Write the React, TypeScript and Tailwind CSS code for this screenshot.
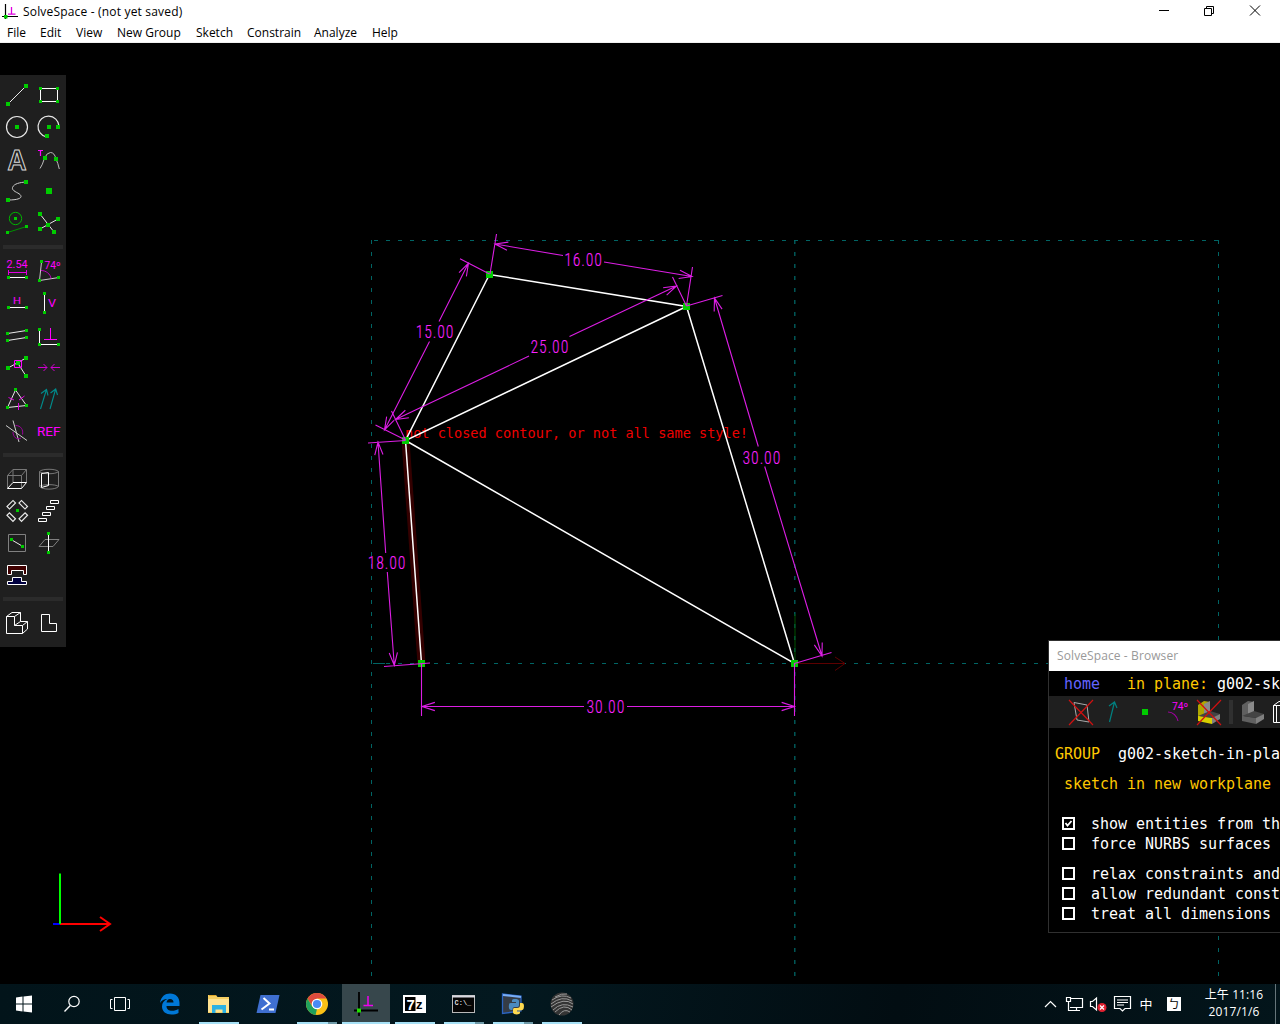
import React from "react";

type Pt = [number, number];

const W = "#ffffff";
const G = "#00cc00";
const M = "#ff00ff";
const D = "#dc1ee4";

function Dots({ pts, s = 4 }: { pts: Pt[]; s?: number }) {
  return (
    <g fill={G} stroke="none" shapeRendering="crispEdges">
      {pts.map(([x, y], i) => (
        <rect key={i} x={Math.floor(x - s / 2)} y={Math.floor(y - s / 2)} width={s} height={s} />
      ))}
    </g>
  );
}

function Icon({ children }: { children?: React.ReactNode }) {
  return (
    <svg className="block size-8 shrink-0" viewBox="0 0 32 32" fill="none" stroke="#e8e8e8" strokeWidth="1">
      {children}
    </svg>
  );
}

function IconText({ x, y, size, w, children }: { x: number; y: number; size: number; w: number; children: string }) {
  return (
    <text x={x} y={y} fill={M} stroke="none" fontFamily="Roboto, sans-serif" fontSize={size} textLength={w} lengthAdjust="spacingAndGlyphs">
      {children}
    </text>
  );
}

const drawTools = [
  <Icon key="line"><path d="M7 25L25 7" /><Dots pts={[[7, 25], [25, 7]]} /></Icon>,
  <Icon key="rect"><path d="M7.5 9.5H24.5V22.5H7.5Z" stroke={W} /><Dots s={3} pts={[[8, 10], [25, 10], [8, 23], [25, 23]]} /></Icon>,
  <Icon key="circle"><circle cx="16" cy="16" r="10.5" strokeWidth="1.2" /><Dots pts={[[16, 16]]} /></Icon>,
  <Icon key="arc"><path d="M26 15A10.5 10.5 0 1 0 13.5 26" strokeWidth="1.2" /><Dots pts={[[16, 16], [25, 16], [14, 25]]} /></Icon>,
  <Icon key="text">
    <text x="6.5" y="26.5" fill="none" stroke="#d8d8d8" strokeWidth="1" fontFamily="Inter, sans-serif" fontWeight="600" fontSize="27" textLength="19" lengthAdjust="spacingAndGlyphs">A</text>
  </Icon>,
  <Icon key="tangent">
    <path d="M7 25.500Q9.500 22 11.500 15Q14 9.500 17.500 9.500Q21.500 9.500 23 16Q25 20 26.300 26" stroke="#bbb" />
    <path d="M5 7.500H10M7.500 7V13" stroke={M} strokeWidth="1.2" />
    <Dots pts={[[12, 15], [23, 16]]} />
  </Icon>,
  <Icon key="spline"><path d="M7 25C20 25 21.500 22 19 19.500C17 17.500 10.500 16 11.500 12.500C13 8.500 19 7.500 25 7" stroke="#ccc" /><Dots pts={[[7, 25], [25, 7]]} /></Icon>,
  <Icon key="point"><Dots s={6} pts={[[16, 16]]} /></Icon>,
  <Icon key="construction"><circle cx="14.500" cy="11.500" r="6.200" stroke="#00b400" /><path d="M6.500 25.500L25.500 19.500" stroke="#009000" /><Dots s={3} pts={[[15, 12], [7, 26], [26, 20]]} /></Icon>,
  <Icon key="split"><path d="M7 7L21 25M7 22L25 12" /><Dots pts={[[7, 7], [21, 25], [7, 22], [25, 12], [15, 18]]} /></Icon>,
];

const constraintTools = [
  <Icon key="dist">
    <IconText x={5.5} y={13} size={10} w={21}>2.54</IconText>
    <path d="M7 17.500H26M7.500 15V20M25.500 15V20" stroke="#e000e0" />
    <path d="M7 22.500H26" stroke={W} /><Dots s={3} pts={[[8, 23], [26, 23]]} />
  </Icon>,
  <Icon key="angle">
    <path d="M8.500 7L6.500 25.500L26 22.500" stroke="#ccc" />
    <path d="M8 15.500C13 15.500 17.500 19 18 23.500" stroke="#c000c0" />
    <IconText x={11.5} y={14} size={10} w={16}>74º</IconText>
    <Dots s={3} pts={[[9, 7], [7, 26], [26, 23]]} />
  </Icon>,
  <Icon key="h"><IconText x={12} y={17} size={9.5} w={8}>H</IconText><path d="M7 20.500H26" stroke={W} /><Dots s={3} pts={[[8, 21], [26, 21]]} /></Icon>,
  <Icon key="v"><path d="M11.500 7V26" stroke={W} /><IconText x={15} y={20.3} size={11} w={8}>V</IconText><Dots s={3} pts={[[12, 7], [12, 26]]} /></Icon>,
  <Icon key="parallel"><path d="M6.500 14.500L25.500 11.500M6.500 21.500L25.500 18.500" /><Dots s={3} pts={[[7, 15], [26, 12], [7, 22], [26, 19]]} /></Icon>,
  <Icon key="perp"><path d="M6.500 11V25.500H26" stroke={W} /><path d="M17.500 9V20.500M11 20.500H24" stroke={M} /><Dots s={3} pts={[[7, 11], [7, 26], [26, 26]]} /></Icon>,
  <Icon key="on"><path d="M7 17L25 7M17 12.500L25 25" /><Dots pts={[[25, 7], [7, 17], [25, 25], [17, 12.5]]} /><path d="M13.500 9.500H20.500V16.500H13.500Z" stroke={M} /></Icon>,
  <Icon key="sym"><path d="M5 16.500H14M10.500 13L14 16.500L10.500 20M27 16.500H18M21.500 13L18 16.500L21.500 20" stroke="#d000d0" /></Icon>,
  <Icon key="equal">
    <path d="M14.500 7L6.500 24.500L25.500 22.500Z" />
    <path d="M7.500 14.500L13 17M18 17L23.500 13M17.500 20V27" stroke="#e000e0" />
    <Dots s={3} pts={[[15, 7], [7, 25], [26, 23]]} />
  </Icon>,
  <Icon key="same"><path d="M7.500 26L13.500 6.500M8 10.500L13.500 6.500L15 12.500M17 26L22.700 6M17.500 10L22.700 6L24.500 12" stroke="#008c8c" strokeWidth="1.1" /></Icon>,
  <Icon key="other"><path d="M5 10.500L26 25.500M12 5.500L18 27" stroke="#ccc" /><path d="M14.500 10.500C20 10.500 22.500 15 21.500 19.500M12 17C12 22 16 25.500 20 23" stroke="#a000a0" /></Icon>,
  <Icon key="ref"><IconText x={4} y={20.5} size={12} w={23.5}>REF</IconText></Icon>,
];

const groupTools = [
  <Icon key="extrude"><path d="M6.500 25.500V12.500H20.500V25.500M6.500 12.500L12 6.500H25.500V19.500M20.500 12.500L25.500 6.500M12 6.500V19.500" stroke="#777" /><path d="M6.500 25.500H20.500L25.500 19.500H12Z" stroke={W} /></Icon>,
  <Icon key="lathe">
    <path d="M6.500 8.500V23.500C9 27 23 27 25.500 23.500V8.500M6.500 8.500C9 5.500 23 5.500 25.500 8.500C23 11.500 9 11.500 6.500 8.500M6.500 23.500C9 21 23 21 25.500 23.500" stroke="#777" />
    <path d="M8.500 10.500V24.500L15.500 22.500V9.500Z" stroke={W} />
  </Icon>,
  <Icon key="rotate">
    <g strokeWidth="1.2">
      <rect x="6" y="8" width="8.500" height="3.500" transform="rotate(-45 10.250 9.750)" />
      <rect x="18" y="8" width="8.500" height="3.500" transform="rotate(45 22.250 9.750)" />
      <rect x="6" y="20.300" width="8.500" height="3.500" transform="rotate(45 10.250 22)" />
      <rect x="18" y="20.300" width="8.500" height="3.500" transform="rotate(-45 22.250 22)" />
    </g>
    <Dots s={3} pts={[[17, 16]]} />
  </Icon>,
  <Icon key="translate"><path d="M5.500 23.500H13.500V26.500H5.500ZM9.500 17.500H17.500V20.500H9.500ZM13.500 11.500H21.500V14.500H13.500ZM17.500 5.500H25.500V8.500H17.500Z" stroke={W} /></Icon>,
  <Icon key="inplane"><path d="M7.500 7.500H24.500V24.500H7.500Z" stroke="#808080" /><path d="M10 12.500L22 19.500" /><Dots s={3} pts={[[11, 13], [22, 20]]} /></Icon>,
  <Icon key="workplane"><path d="M6 19.500L12 12.500H26L20 19.500Z" stroke="#808080" /><path d="M15.500 7V26" stroke={W} /><Dots s={3} pts={[[16, 7], [16, 26]]} /></Icon>,
  <Icon key="assemble">
    <path d="M6.500 6.500H25.500V15.500H22.500V11.500H10.500V15.500H6.500Z" fill="#400000" stroke={W} />
    <path d="M6.500 25.500V22.500H11.500V18.500H20.500V22.500H25.500V25.500Z" fill="#000040" stroke={W} />
  </Icon>,
  <Icon key="blank" />,
];

const viewTools = [
  <Icon key="iso">
    <path d="M5.500 9.500H13.500V18.500H21.500V26.500H5.500ZM5.500 9.500L11 5.500H19.500V14.500H26.500V22L21.500 26.500M13.500 9.500L19.500 5.500M13.500 18.500L19.500 14.500M21.500 18.500L26.500 14.500" stroke={W} />
  </Icon>,
  <Icon key="ortho"><path d="M8.500 7.500H16.500V16.500H23.500V24.500H8.500Z" stroke={W} /></Icon>,
];

function Separator() {
  return <div className="mx-[3px] my-1.5 h-1 bg-[#2b2b2b]" />;
}

function Toolbar() {
  const sections = [drawTools, constraintTools, groupTools, viewTools];
  return (
    <div className="absolute left-0 top-8 h-[572px] w-[66px] bg-[#1f1f1f] pt-1">
      {sections.map((s, i) => (
        <React.Fragment key={i}>
          {i > 0 && <Separator />}
          <div className="grid grid-cols-[32px_32px] pl-px">{s}</div>
        </React.Fragment>
      ))}
    </div>
  );
}

function arrow([x, y]: Pt, [fx, fy]: Pt, len = 13.5, spread = 0.31) {
  const a = Math.atan2(fy - y, fx - x);
  const p = (t: number) => `${x + len * Math.cos(t)} ${y + len * Math.sin(t)}`;
  return `M${p(a - spread)}L${x} ${y}L${p(a + spread)}`;
}

interface Dim {
  label: string;
  c: Pt;
  a: [Pt, Pt];
  b: [Pt, Pt];
  ext: string;
}

const dims: Dim[] = [
  { label: "16.00", c: [583, 259], a: [[495, 244], [563, 255.5]], b: [[692, 276.5], [604, 262]], ext: "M490 274L496.500 234M686.500 306L692.500 267" },
  { label: "15.00", c: [434.5, 331.5], a: [[468.5, 263], [439, 321.5]], b: [[384.5, 430], [429.5, 341.5]], ext: "M489.500 274L460 258.700M405.500 440L375.500 425" },
  { label: "25.00", c: [549.3, 346.5], a: [[676.5, 286], [569.5, 336.5]], b: [[395.5, 419.5], [529, 356]], ext: "M686.500 306L672.500 277M405.500 440L391.500 411" },
  { label: "30.00", c: [761.3, 457.5], a: [[714.5, 298], [758.3, 446.5]], b: [[822, 656], [764.7, 466.5]], ext: "M686.500 306L722.500 295.500M794.500 663.500L831.500 652.500" },
  { label: "18.00", c: [386.5, 562.5], a: [[378, 442], [385.7, 553]], b: [[394.3, 665.5], [387.3, 572]], ext: "M405.500 440.500L368 443M430 663L384 666.500" },
  { label: "30.00", c: [605.3, 706.5], a: [[422, 706.5], [584, 706.5]], b: [[794.5, 706.5], [627, 706.5]], ext: "M421.500 663V716M794.500 663V716" },
];

function Sketch() {
  return (
    <svg className="block h-full w-full" viewBox="0 43 1280 941" fill="none">
      <g stroke="#006464" strokeWidth="1" strokeDasharray="4 8">
        <path d="M371.500 240V976M1218.500 240V976" />
        <path d="M794.800 240V976" strokeWidth="1.300" />
        <path d="M374 240.500H1218M374 663.500H1218" />
      </g>
      <path d="M373 663.500H385" stroke="#006464" />
      <path d="M405.500 440.500L421.500 663.500" stroke="#330000" strokeWidth="8" />
      <text x="405" y="438" fill="#ee0000" fontFamily="'DejaVu Sans Mono', monospace" fontSize="13.600" textLength="343" lengthAdjust="spacingAndGlyphs">
        not closed contour, or not all same style!
      </text>
      <path d="M795 614V663" stroke="#005000" />
      <path d="M795 663.500H845M835 657L845 663.500L835 670.500" stroke="#5c0000" />
      <path d="M421.500 663.500L405.500 440.500L489.500 274.500L686.500 306.500L794.500 663.500L405.500 440.500L686.500 306.500" stroke={W} strokeWidth="1.500" />
      <Dots s={7} pts={[[406, 441], [490, 275], [687, 307], [795, 664], [422, 664]]} />
      {dims.map((d, i) => (
        <g key={i} stroke={D} strokeWidth="1.100">
          <path d={`M${d.a[0]}L${d.a[1]}M${d.b[0]}L${d.b[1]}${d.ext}${arrow(d.a[0], d.a[1])}${arrow(d.b[0], d.b[1])}`} />
          <text
            transform={`translate(${d.c[0] - 18.5} ${d.c[1] + 6.5}) scale(0.720 1)`}
            fill="#f822ff"
            stroke="#f822ff"
            strokeWidth="0.200"
            fontFamily="Roboto, sans-serif"
            fontWeight="300"
            fontSize="18"
            letterSpacing="1.900"
          >
            {d.label}
          </text>
        </g>
      ))}
      <g strokeWidth="2">
        <path d="M53 924H60" stroke="#0000ff" />
        <path d="M60 924H110M100 917L110 924L100 931" stroke="#ff0000" />
        <path d="M60 873.500V924" stroke="#00ff00" />
      </g>
    </svg>
  );
}

function Solid({ yellow = false }: { yellow?: boolean }) {
  return (
    <g stroke="none">
      <path d="M5 9L11 5L17 6V15L11 18L5 22Z" fill={yellow ? "#b0a800" : "#606060"} />
      <path d="M11 8L17 5V16L11 18Z" fill="#8a8a8a" />
      <path d="M5 20L17 15L27 18L20 22Z" fill="#444" />
      <path d="M5 20L19 22V28L5 25Z" fill={yellow ? "#d8d000" : "#606060"} />
      <path d="M19 22L27 18V23L19 28Z" fill="#808080" />
    </g>
  );
}

const cross = <path d="M4 4L28 29M28 4L4 29" stroke="#d01010" strokeWidth="1.200" />;

function Row({ children, className }: { children: React.ReactNode; className: string }) {
  return <div className={`h-5 whitespace-pre pl-[6px] ${className}`}>{children}</div>;
}

function Check({ label, on = false, className = "" }: { label: string; on?: boolean; className?: string }) {
  return (
    <div className={`flex h-5 pl-[13px] ${className}`}>
      <svg className="mr-4 mt-[3px] size-[13px] shrink-0" viewBox="0 0 13 13" fill="none" stroke={W}>
        <rect x="1" y="1" width="11" height="11" strokeWidth="2" />
        {on && <path d="M3.500 6L5.500 8.500L9.500 4" strokeWidth="1.800" />}
      </svg>
      <span className="whitespace-pre text-white">{label}</span>
    </div>
  );
}

function BrowserPanel() {
  return (
    <div className="absolute left-[1048px] top-[597px] h-[293px] w-[232px] overflow-hidden border-y border-l border-[#303030] bg-black">
      <div className="h-[30px] bg-white pl-2 font-['Open_Sans',sans-serif] text-[12px] leading-[30px] tracking-[0.1px] text-[#999999]">SolveSpace - Browser</div>
      <div className="pt-[3px] font-['DejaVu_Sans_Mono',monospace] text-[15px] leading-5 tracking-[-0.03px]">
        <Row className="text-white">
          <span className="text-[#6464ff]"> home</span>
          <span className="text-[#ffc800]">   in plane: </span>g002-sk
        </Row>
        <div className="mt-[2px] flex h-8 items-center bg-[#1f1f1f] pl-4">
          <Icon><path d="M9 6.500L22 9L24 26L12 24Z" stroke="#aaa" />{cross}</Icon>
          <Icon><path d="M12.500 26L17.500 6M12 10L17.500 6L20 12" stroke="#008080" strokeWidth="1.200" /></Icon>
          <Icon><Dots s={6} pts={[[16, 16]]} /></Icon>
          <Icon><path d="M7 16C12 16 16 20 17 25" stroke="#a000a0" strokeWidth="1.200" /><IconText x={11} y={14} size={10} w={16}>74º</IconText></Icon>
          <Icon><Solid yellow />{cross}</Icon>
          <div className="mx-1 h-6 w-1 shrink-0 bg-[#303030]" />
          <Icon><Solid /></Icon>
          <Icon><path d="M4.500 9.500L10 5.500H20V14H27V22L21.500 26.500H4.500ZM4.500 9.500H13.500V18.500H21.500V26.500M7.500 10V26" stroke={W} /></Icon>
        </div>
        <Row className="mt-4 text-white"><span className="text-[#ffc800]">GROUP  </span>g002-sketch-in-pla</Row>
        <Row className="mt-2.5 text-[#ffc800]"> sketch in new workplane</Row>
        <Check className="mt-5" on label="show entities from th" />
        <Check label="force NURBS surfaces" />
        <Check className="mt-2.5" label="relax constraints and" />
        <Check label="allow redundant const" />
        <Check label="treat all dimensions" />
      </div>
    </div>
  );
}

const menus: [string, string][] = [
  ["File", "w-[33px]"], ["Edit", "w-[36px]"], ["View", "w-[41px]"], ["New Group", "w-[79px]"],
  ["Sketch", "w-[51px]"], ["Constrain", "w-[67px]"], ["Analyze", "w-[58px]"], ["Help", "w-[40px]"],
];

function Header() {
  return (
    <header className="h-[43px] border-b border-[#f0f0f0] bg-white font-['Open_Sans',sans-serif] text-[12px] text-black">
      <div className="flex h-[22px] items-center pt-0.5">
        <svg className="mr-1 ml-0.5 size-[17px]" viewBox="0 0 17 17" fill="none">
          <path d="M3.500 0V15M0 12.500H16" stroke="#000" strokeWidth="1.200" />
          <path d="M9.500 3V10M6 10.200H13.500" stroke="#e000e0" strokeWidth="1.300" />
          <rect x="2" y="11" width="3.500" height="3.500" fill={G} />
        </svg>
        <span className="grow tracking-[0.180px]">SolveSpace - (not yet saved)</span>
        <svg className="mr-[15px] h-4 w-[106px]" viewBox="0 0 106 16" fill="none" stroke="#000">
          <path d="M0 6.500H10M45.500 4.500H52.500V11.500H45.500ZM47.500 4.500V2.500H54.500V9.500H52.500" />
          <path d="M91 1.500L101 11.500M101 1.500L91 11.500" />
        </svg>
      </div>
      <nav className="flex h-5 items-center pl-[7px] pt-0.5 leading-5">
        {menus.map(([m, w]) => <span key={m} className={`shrink-0 whitespace-nowrap ${w}`}>{m}</span>)}
      </nav>
    </header>
  );
}

function Task({ children, active = false, bar = "none" }: { children: React.ReactNode; active?: boolean; bar?: "none" | "full" | "stack" }) {
  return (
    <div className={`flex h-10 w-12 shrink-0 flex-col items-center ${active ? "bg-[#37474c]" : ""}`}>
      <svg className="mt-2 mb-1.5 size-6 shrink-0" viewBox="0 0 24 24" fill="none">{children}</svg>
      {bar === "full" && <div className={`h-0.5 bg-[#a6e0f5] ${active ? "w-full" : "w-10"}`} />}
      {bar === "stack" && (
        <div className="flex h-0.5 w-10"><div className="w-[31px] bg-[#a6e0f5]" /><div className="grow bg-[#6f9aa8]" /></div>
      )}
    </div>
  );
}

function Taskbar() {
  return (
    <footer className="flex h-10 bg-[linear-gradient(100deg,#02141a,#03181f_40%,#020d12_70%,#03151b)]">
      <Task><path d="M4 5.500L10.500 4.500V11.500H4ZM11.500 4.400L20 3.500V11.500H11.500ZM4 12.500H10.500V19.500L4 18.600ZM11.500 12.500H20V20.500L11.500 19.600Z" fill={W} /></Task>
      <Task><circle cx="14" cy="9.500" r="5.200" stroke={W} strokeWidth="1.200" /><path d="M10.300 13.500L4.500 19.500" stroke={W} strokeWidth="1.300" /></Task>
      <Task><path d="M6.500 5.500H17.500V18.500H6.500ZM4.500 7.500H2.500V16.500H4.500M19.500 7.500H21.500V16.500H19.500" stroke={W} /></Task>
      <div className="ml-0.5 flex gap-px">
        <Task>
          <path d="M2 11C3 4.500 7 1.500 12 1.500C18 1.500 21.500 5.500 21.500 11V14H8.500C8.500 17.500 11 18.800 14 18.800C16.500 18.800 18.500 18.200 20.500 17V21C18.500 22.300 16 22.500 13.500 22.500C8 22.500 4 19.500 4 14.500C4 11 6 8.500 9.500 7C6 7 3.500 8.500 2 11ZM8.500 10.500H15.500C15.500 8.500 14.300 7 12 7C10 7 8.800 8.600 8.500 10.500Z" fill="#0078d7" />
        </Task>
        <Task bar="full">
          <path d="M1 3H9L10.500 5H22V21H1Z" fill="#f6cf62" /><path d="M1 7H22V20H1Z" fill="#ffe391" /><path d="M2 3.500H9" stroke="#e0a92c" />
          <path d="M5 13H19V21H15.500V17.500H8.500V21H5Z" fill="#2bb1e3" />
        </Task>
        <Task><path d="M4.500 3H23.500L19.500 21H0.500Z" fill="#3f6fd0" /><path d="M7.500 6L13.500 11.500L5.500 17.500M13 17.500H18" stroke={W} strokeWidth="2" /></Task>
        <Task bar="stack">
          <circle cx="12" cy="12" r="11" fill="#fbc116" />
          <path d="M2.500 6.500A11 11 0 0 1 21.500 6.500H12L7.500 14.500Z" fill="#dd4b3e" />
          <path d="M2.500 6.500L7.300 14.700L12 17L10.500 22.900A11 11 0 0 1 2.500 6.500Z" fill="#1fa15d" />
          <circle cx="12" cy="12" r="5.300" fill="#fff" /><circle cx="12" cy="12" r="4.100" fill="#4a8af4" />
        </Task>
        <Task active bar="full">
          <path d="M5 0V24M0 18.500H24" stroke="#000" strokeWidth="1.800" />
          <path d="M14 4V13.500M9.500 13.500H19" stroke="#f000f0" strokeWidth="1.500" />
          <rect x="3" y="16.500" width="4" height="4" fill="#20e000" />
        </Task>
        <Task bar="full">
          <rect x="1" y="4" width="21" height="16" fill="#000" stroke="#fff" strokeWidth="2" /><rect x="12.500" y="5" width="9" height="14" fill="#fff" />
          <text x="3.500" y="17.500" fontFamily="'Liberation Sans', sans-serif" fontWeight="700" fontSize="15" fill="#fff">7</text>
          <text x="13" y="17" fontFamily="'Liberation Sans', sans-serif" fontWeight="700" fontSize="13" fill="#000">z</text>
        </Task>
        <Task bar="stack">
          <rect x="0.500" y="3.500" width="22" height="17" fill="#050505" stroke="#b8b8b8" /><path d="M0 4.500H23" stroke="#d8d8e0" strokeWidth="2" />
          <text x="2.500" y="12.500" fontFamily="'Liberation Mono', monospace" fontWeight="700" fontSize="7" fill="#ddd">C:\_</text>
        </Task>
        <Task bar="stack">
          <path d="M1.500 2L20 4V19L1.500 21.500Z" fill="#353c46" stroke="#2b63c0" strokeWidth="1.300" /><path d="M2 3L20 5" stroke="#79aef5" strokeWidth="2" />
          <path d="M8 13C8 11 9 11 11 11H15V10H11V8.500C11 6.500 18 6.500 18 9V13C18 15.500 16 15 14 15C12 15 11.500 16 11.500 18H10C8 18 7.500 15 8 13Z" fill="#4b8bc0" />
          <path d="M19 11H21C23 11 23.500 14 22.500 17C22 18.500 20 18.500 16 18.500V19.500H19V21C19 23 12 23 12 20.500V18C12 15.500 13.500 16 16 16C18.500 16 19 15 19 13Z" fill="#ffd94f" />
        </Task>
        <Task bar="full">
          <circle cx="12" cy="12" r="11.500" fill="#343434" />
          <path d="M2 8Q12 1 21 6M1 12Q12 3 22 9M1 15Q14 5 23 12M3 18Q12 9 23 15M5 20Q14 11 22 18M9 23Q14 16 20 20M5 5Q12 1 17 2" stroke="#999" strokeWidth="1" />
        </Task>
      </div>
      <svg className="mr-0.5 ml-auto h-10 w-[150px]" viewBox="0 0 150 40" fill="none" stroke={W} strokeWidth="1.200">
        <path d="M7 23L12.500 17.500L18 23" />
        <path d="M33 14.500H44.500V23.500H32M28.500 13.500H32.500V17.500H28.500ZM30.500 17.500V26.500H42M38.500 24V26.500" />
        <path d="M52.500 17.500H54.500L58.500 14V26L54.500 22.500H52.500Z" />
        <circle cx="64" cy="23.500" r="4.500" fill="#e02030" stroke="none" /><path d="M62 21.500L66 25.500M66 21.500L62 25.500" />
        <path d="M76.500 12.500H92.500V24.500H87L84.500 27L82 24.500H76.500ZM79 16H90M79 18.500H90M79 21H86" />
        <text x="101.500" y="24.500" fill={W} stroke="none" fontFamily="'Noto Sans CJK TC', sans-serif" fontSize="13">中</text>
        <rect x="129" y="13" width="14" height="14" fill={W} stroke="none" />
        <text x="130" y="24.500" fill="#000" stroke="none" fontFamily="'Noto Sans CJK TC', sans-serif" fontSize="12">ㄅ</text>
      </svg>
      <div className="w-[86px] pl-0.5 pt-[2px] text-center font-['Open_Sans','Noto_Sans_CJK_TC',sans-serif] text-[12px] leading-[17px] tracking-[0.100px] text-white">
        <div>上午 11:16</div>
        <div>2017/1/6</div>
      </div>
      <div className="mr-1 -ml-px w-px bg-[#66757a]" />
    </footer>
  );
}

export default function App() {
  return (
    <div className="flex h-[1024px] w-[1280px] flex-col overflow-hidden bg-black">
      <Header />
      <main className="relative h-[941px] shrink-0 overflow-hidden bg-black">
        <Sketch />
        <Toolbar />
        <BrowserPanel />
      </main>
      <Taskbar />
    </div>
  );
}
